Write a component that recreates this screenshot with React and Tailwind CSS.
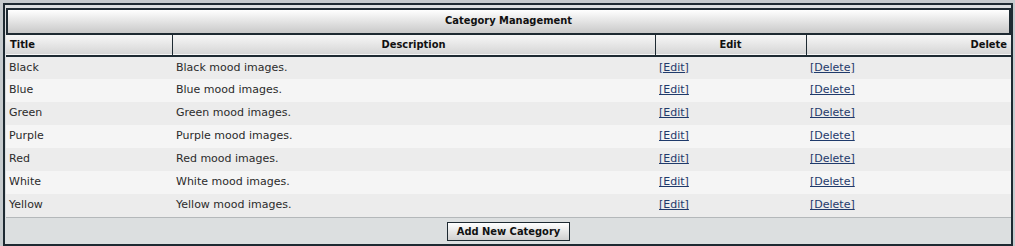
import React from 'react';

const categories = [
  { title: 'Black', description: 'Black mood images.' },
  { title: 'Blue', description: 'Blue mood images.' },
  { title: 'Green', description: 'Green mood images.' },
  { title: 'Purple', description: 'Purple mood images.' },
  { title: 'Red', description: 'Red mood images.' },
  { title: 'White', description: 'White mood images.' },
  { title: 'Yellow', description: 'Yellow mood images.' },
];

const boldFont = { fontFamily: '"DejaVu Sans Condensed", "DejaVu Sans", Tahoma, sans-serif' };
const bodyFont = { fontFamily: '"DejaVu Sans", Tahoma, sans-serif' };

export default function App() {
  return (
    <div className="w-[1015px] h-[246px] bg-[#c6cbce] pt-[3px] pl-[3px] pr-[2px]" style={boldFont}>
      <div className="h-[243px] border-2 border-[#1e2a32] bg-[#dcdfe1] pt-[3px] pl-[1px] flex flex-col">
        <div className="h-[27px] shrink-0 border-2 border-[#1e2a32] bg-gradient-to-b from-[#ffffff] to-[#c9c9c9] flex items-center justify-center text-[11px] font-bold text-[#111]">
          Category Management
        </div>
        <table className="w-full border-collapse text-[11px] text-[#2b2b2b] table-fixed">
          <colgroup>
            <col className="w-[166px]" />
            <col className="w-[483px]" />
            <col className="w-[151px]" />
            <col />
          </colgroup>
          <thead>
            <tr className="h-[21px] bg-gradient-to-b from-[#f7f7f7] to-[#d6d6d6] font-bold text-[#111] border-b-2 border-[#1e2a32]">
              <th className="text-left pl-[4px] border-r border-[#1e2a32]">Title</th>
              <th className="text-center border-r border-[#1e2a32]">Description</th>
              <th className="text-center border-r border-[#1e2a32]">Edit</th>
              <th className="text-right pr-[4px]">Delete</th>
            </tr>
          </thead>
          <tbody style={bodyFont}>
            {categories.map((c, i) => (
              <tr key={c.title} className={`h-[23px] ${i % 2 === 0 ? 'bg-[#ececec]' : 'bg-[#f5f5f5]'}`}>
                <td className="pl-[3px]">{c.title}</td>
                <td className="pl-[4px]">{c.description}</td>
                <td className="pl-[4px]">
                  <a href="#" className="text-[#1f3a6b] underline">[Edit]</a>
                </td>
                <td className="pl-[4px]">
                  <a href="#" className="text-[#1f3a6b] underline">[Delete]</a>
                </td>
              </tr>
            ))}
          </tbody>
        </table>
        <div className="flex-1 border-t border-[#b4b8ba] bg-[#dcdfe0] flex items-center justify-center">
          <button className="h-[19px] px-[9px] border border-[#1e2a32] bg-gradient-to-b from-[#ffffff] to-[#d0d0d0] text-[11px] font-bold text-[#111] leading-none">
            Add New Category
          </button>
        </div>
      </div>
    </div>
  );
}
